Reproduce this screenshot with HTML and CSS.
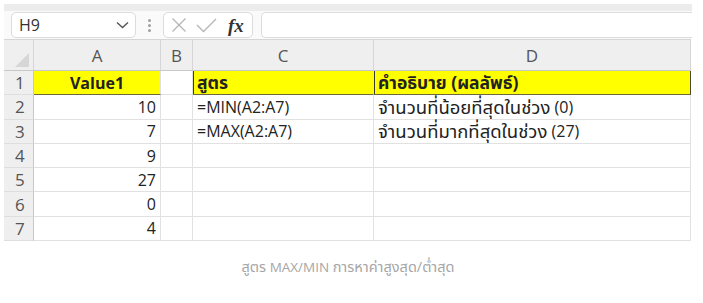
FILE: index.html
```html
<!DOCTYPE html>
<html lang="th">
<head>
<meta charset="utf-8">
<link rel="stylesheet" href="styles.css">
</head>
<body>
<div class="shot">
  <div class="band"></div>
  <div class="toolbar">
    <div class="namebox">
      <span class="ref">H9</span>
      <svg class="chev" width="13" height="8" viewBox="0 0 13 8"><path d="M1 1.5 L6.5 6.5 L12 1.5" fill="none" stroke="#555" stroke-width="1.4"/></svg>
    </div>
    <div class="dots"><i></i><i></i><i></i></div>
    <div class="fxbox">
      <svg width="16" height="16" viewBox="0 0 16 16"><path d="M1.5 1.5 L14.5 14.5 M14.5 1.5 L1.5 14.5" stroke="#b5b5b5" stroke-width="1.3" fill="none"/></svg>
      <svg width="21" height="16" viewBox="0 0 21 16"><path d="M1 8 L7.5 14.5 L20 2" stroke="#b5b5b5" stroke-width="1.3" fill="none"/></svg>
      <span class="fx">fx</span>
    </div>
    <div class="input"></div>
  </div>
  <div class="sheet">
    <div class="corner"><span class="tri"></span></div>
    <div class="ch">A</div>
    <div class="ch">B</div>
    <div class="ch">C</div>
    <div class="ch">D</div>

    <div class="rh">1</div>
    <div class="c num bold yel ctr yb">Value1</div>
    <div class="c"></div>
    <div class="c bold yel yb yl"><span class="thb">สูตร</span></div>
    <div class="c bold yel yb yl yr"><span class="thb">คำอธิบาย (ผลลัพธ์)</span></div>

    <div class="rh">2</div>
    <div class="c num">10</div>
    <div class="c"></div>
    <div class="c">=MIN(A2:A7)</div>
    <div class="c"><span class="th">จำนวนที่น้อยที่สุดในช่วง</span>&nbsp;(0)</div>

    <div class="rh">3</div>
    <div class="c num">7</div>
    <div class="c"></div>
    <div class="c">=MAX(A2:A7)</div>
    <div class="c"><span class="th">จำนวนที่มากที่สุดในช่วง</span>&nbsp;(27)</div>

    <div class="rh">4</div>
    <div class="c num">9</div>
    <div class="c"></div>
    <div class="c"></div>
    <div class="c"></div>

    <div class="rh">5</div>
    <div class="c num">27</div>
    <div class="c"></div>
    <div class="c"></div>
    <div class="c"></div>

    <div class="rh">6</div>
    <div class="c num">0</div>
    <div class="c"></div>
    <div class="c"></div>
    <div class="c"></div>

    <div class="rh">7</div>
    <div class="c num">4</div>
    <div class="c"></div>
    <div class="c"></div>
    <div class="c"></div>
  </div>
</div>
<p class="caption"><span class="thc">สูตร</span> MAX/MIN <span class="thc">การหาค่าสูงสุด/ต่ำสุด</span></p>
</body>
</html>
```

FILE: styles.css
```css
* { box-sizing: border-box; }
html, body { margin: 0; padding: 0; background: #fff; }
body {
  font-family: "Open Sans", "Noto Sans", "Noto Sans Thai", sans-serif;
  color: #222;
}
.shot {
  margin: 4px 0 0 4px;
  width: 688px;
}
.band {
  height: 7px;
  background: #ececec;
}
.toolbar {
  height: 28px;
  background: #fafafa;
  display: flex;
  align-items: center;
  padding: 1px 0 1px 7px;
}
.namebox {
  width: 125px;
  height: 26px;
  background: #fff;
  border: 1px solid #dcdcdc;
  border-radius: 5px;
  display: flex;
  align-items: center;
  justify-content: space-between;
  padding: 0 6px 0 7px;
  font-size: 16px;
  color: #333;
}
.dots {
  width: 27px;
  display: flex;
  flex-direction: column;
  align-items: center;
  gap: 2px;
}
.dots i {
  width: 3px;
  height: 3px;
  background: #a0a0a0;
  border-radius: 50%;
}
.fxbox {
  width: 90px;
  height: 26px;
  background: #fff;
  border: 1px solid #dcdcdc;
  border-radius: 5px;
  display: flex;
  align-items: center;
  gap: 9px;
  padding: 0 4px 0 7px;
}
.fx {
  font-family: "Liberation Serif", "DejaVu Serif", serif;
  font-style: italic;
  font-weight: bold;
  font-size: 19px;
  color: #333;
  margin-left: 2px;
  line-height: 1;
}
.input {
  flex: 1;
  height: 26px;
  margin-left: 8px;
  background: #fff;
  border: 1px solid #dcdcdc;
  border-right: none;
  border-radius: 5px 0 0 5px;
}
.sheet {
  display: grid;
  grid-template-columns: 30px 127px 32px 181px 317px;
  grid-template-rows: 32px repeat(7, 24.3px);
  width: 687px;
  font-size: 16px;
}
.corner {
  background: #efefef;
  border-top: 1px solid #d6d6d6;
  border-right: 1px solid #d6d6d6;
  border-bottom: 1px solid #c8c8c8;
  position: relative;
}
.tri {
  position: absolute;
  right: 4px;
  bottom: 3px;
  width: 0;
  height: 0;
  border-left: 14px solid transparent;
  border-bottom: 14px solid #d6d6d6;
}
.ch {
  background: #efefef;
  border-top: 1px solid #d6d6d6;
  border-right: 1px solid #d6d6d6;
  border-bottom: 1px solid #c8c8c8;
  display: flex;
  align-items: center;
  justify-content: center;
  color: #555;
  font-size: 17px;
}
.rh {
  background: #efefef;
  border-right: 1px solid #c8c8c8;
  border-bottom: 1px solid #dedede;
  display: flex;
  align-items: center;
  padding-left: 11px;
  color: #555;
  font-size: 17px;
}
.c {
  border-right: 1px solid #e1e1e1;
  border-bottom: 1px solid #e1e1e1;
  display: flex;
  align-items: center;
  padding: 0 4px;
  white-space: nowrap;
  color: #222;
}
.th { font-size: 18.5px; line-height: 1; }
.thb { font-size: 17.5px; line-height: 1; }
.num { justify-content: flex-end; }
.ctr { justify-content: center; }
.bold { font-weight: bold; }
.yel { background: #ffff00; }
.yb { border-bottom: 1px solid #6a6a3a; }
.yl { box-shadow: inset 1px 0 0 #3a3a3a; }
.yr { border-right: 1px solid #4a4a2a; }
.caption {
  margin: 16px 0 0 0;
  width: 696px;
  text-align: center;
  font-size: 13.5px;
  color: #a6a6a6;
}
.thc { font-size: 14.5px; }
```
